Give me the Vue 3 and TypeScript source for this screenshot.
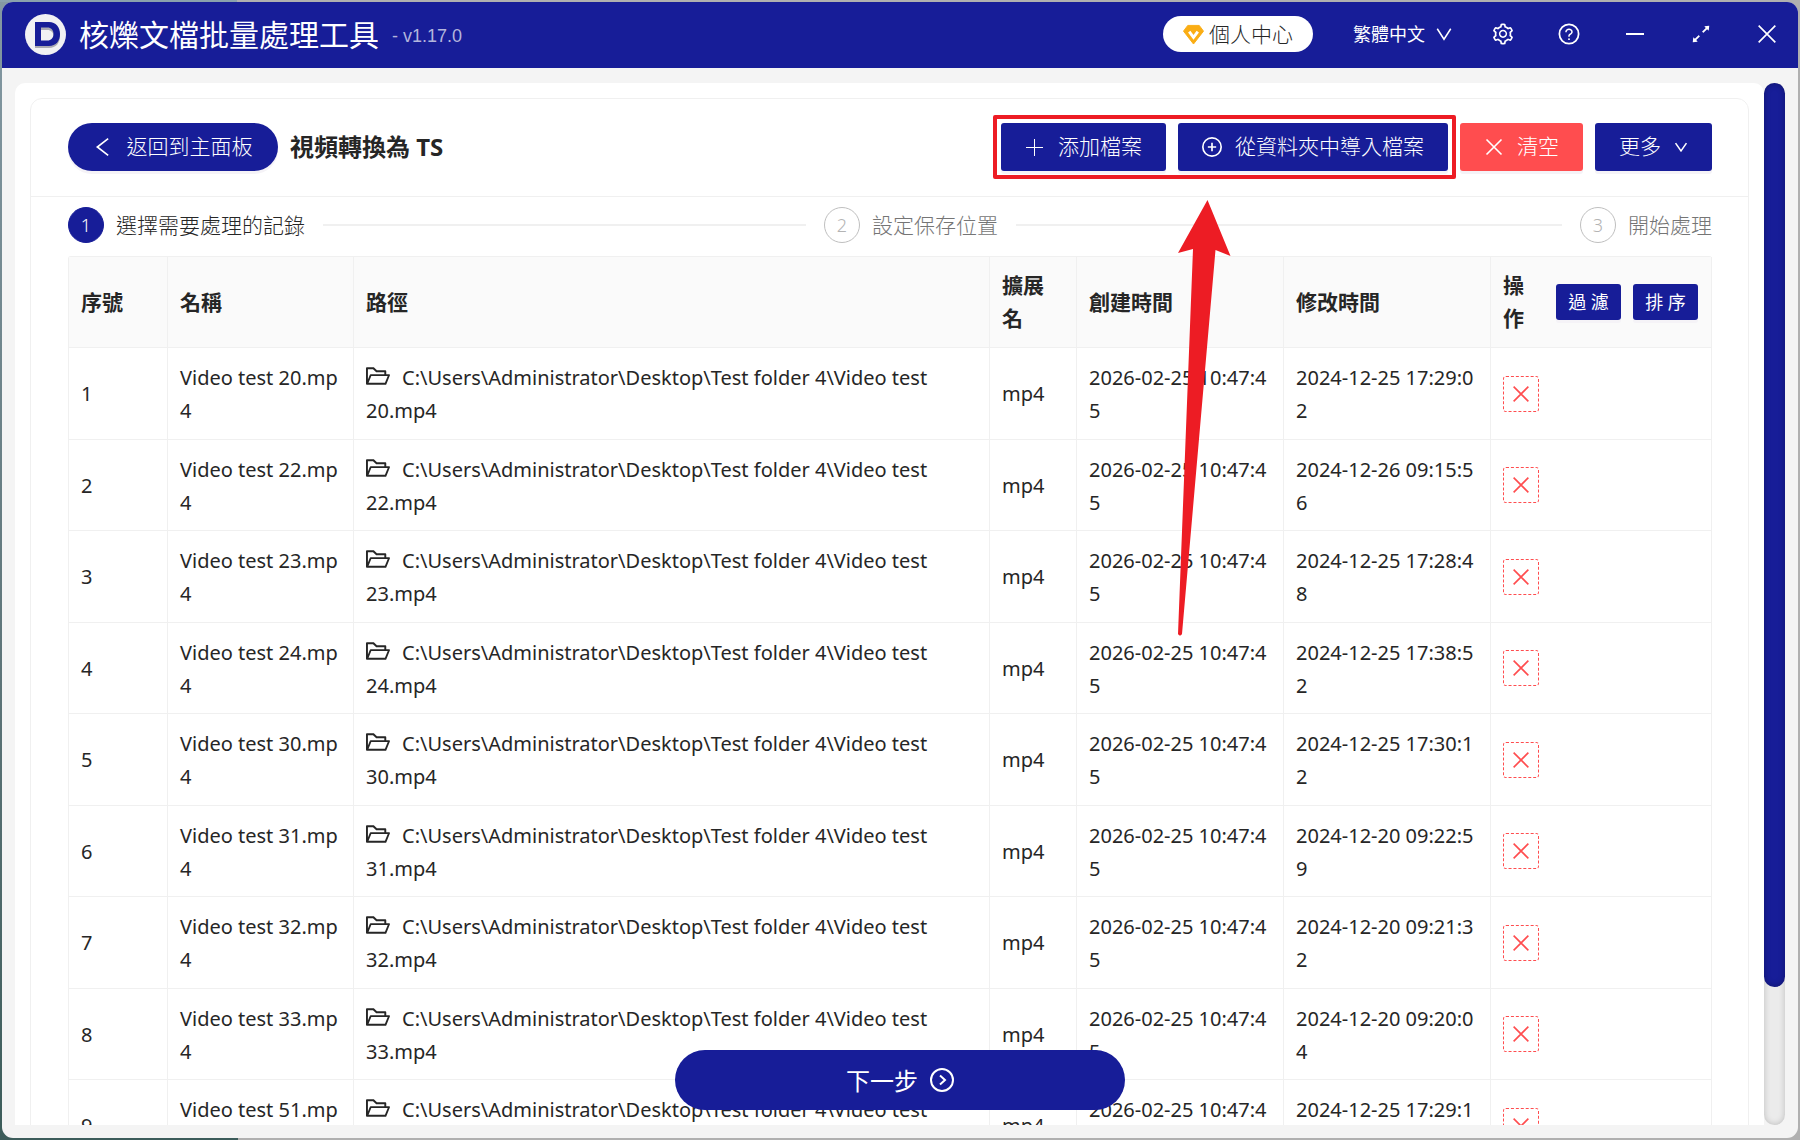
<script setup lang="ts">
import { ref } from 'vue'

interface VideoRecord {
  name: string
  ext: string
  created: string
  modified: string
}

const folder = 'C:\\Users\\Administrator\\Desktop\\Test folder 4\\'
const created = '2026-02-25 10:47:45'

const records = ref<VideoRecord[]>([
  { name: 'Video test 20.mp4', ext: 'mp4', created, modified: '2024-12-25 17:29:02' },
  { name: 'Video test 22.mp4', ext: 'mp4', created, modified: '2024-12-26 09:15:56' },
  { name: 'Video test 23.mp4', ext: 'mp4', created, modified: '2024-12-25 17:28:48' },
  { name: 'Video test 24.mp4', ext: 'mp4', created, modified: '2024-12-25 17:38:52' },
  { name: 'Video test 30.mp4', ext: 'mp4', created, modified: '2024-12-25 17:30:12' },
  { name: 'Video test 31.mp4', ext: 'mp4', created, modified: '2024-12-20 09:22:59' },
  { name: 'Video test 32.mp4', ext: 'mp4', created, modified: '2024-12-20 09:21:32' },
  { name: 'Video test 33.mp4', ext: 'mp4', created, modified: '2024-12-20 09:20:04' },
  { name: 'Video test 51.mp4', ext: 'mp4', created, modified: '2024-12-25 17:29:12' },
])

const steps = ['選擇需要處理的記錄', '設定保存位置', '開始處理']
const current = ref(0)

function removeRecord(index: number) {
  records.value.splice(index, 1)
}
</script>

<template>
  <div class="desktop">
    <div class="window">
      <header class="titlebar">
        <svg class="logo" viewBox="0 0 41 41" aria-hidden="true">
          <circle cx="20.5" cy="20.5" r="20.5" fill="#f1f1f3" />
          <path fill-rule="evenodd" d="M10 10h14c7 0 11 5 11 12s-4 12-11 12H10zM16 16v12h6.500c3.500 0 6-2.500 6-6s-2.500-6-6-6z" fill="#8a8a96" opacity=".7" />
          <path fill-rule="evenodd" d="M10 8h14c7 0 11 5 11 12s-4 12-11 12H10zM16 13.500v13h6.500c3.500 0 6-2.500 6-6.500s-2.500-6.500-6-6.500z" fill="#171d98" />
        </svg>
        <h1 class="app-name">核爍文檔批量處理工具</h1>
        <span class="version">- v1.17.0</span>
        <button class="account" type="button">
          <svg class="icon-vip" viewBox="0 0 22 22" aria-hidden="true">
            <path d="M5 2h12l4.500 6L11 21.500.5 8z" fill="#faad14" stroke="#faad14" stroke-linejoin="round" />
            <path d="M6.500 8.500 11 14.500l4.500-6" fill="none" stroke="#fff" stroke-width="3" />
          </svg>
          個人中心
        </button>
        <button class="language" type="button">
          繁體中文
          <svg class="icon-18" viewBox="0 0 24 24" aria-hidden="true"><path class="line" d="M3 5l9 14 9-14" /></svg>
        </button>
        <nav class="window-tools">
          <button type="button" aria-label="設定">
            <svg class="icon-24" viewBox="0 0 1024 1024" aria-hidden="true"><path fill="currentColor" d="M924.8 625.7l-65.5-56c3.1-19 4.7-38.4 4.7-57.8s-1.6-38.8-4.7-57.8l65.5-56a32.03 32.03 0 009.3-35.2l-.9-2.6a443.74 443.74 0 00-79.7-137.9l-1.8-2.1a32.12 32.12 0 00-35.1-9.5l-81.3 28.9c-30-24.6-63.5-44-99.7-57.6l-15.7-85a32.05 32.05 0 00-25.8-25.7l-2.7-.5c-52.1-9.4-106.900-9.4-159 0l-2.7.5a32.05 32.05 0 00-25.8 25.7l-15.8 85.4a351.86 351.86 0 00-99 57.4l-81.9-29.1a32 32 0 00-35.1 9.5l-1.8 2.1a446.02 446.02 0 00-79.7 137.9l-.9 2.6c-4.5 12.5-.8 26.5 9.3 35.2l66.3 56.6c-3.1 18.8-4.6 38-4.6 57.1 0 19.2 1.5 38.4 4.6 57.1L99 625.5a32.03 32.03 0 00-9.300 35.2l.9 2.6c18.1 50.4 44.900 96.900 79.7 137.900l1.8 2.1a32.120 32.120 0 0035.1 9.5l81.9-29.1c29.8 24.5 63.1 43.9 99 57.4l15.8 85.4a32.05 32.05 0 0025.8 25.7l2.7.5a449.4 449.4 0 00159 0l2.7-.5a32.05 32.05 0 0025.8-25.7l15.7-85a350 350 0 0099.7-57.6l81.3 28.9a32 32 0 0035.1-9.5l1.8-2.1c34.8-41.1 61.6-87.5 79.7-137.9l.9-2.6c4.5-12.3.8-26.3-9.3-35zM788.3 465.9c2.500 15.1 3.8 30.6 3.8 46.1s-1.3 31-3.8 46.1l-6.6 40.1 74.7 63.9a370.03 370.03 0 01-42.6 73.6L721 702.8l-31.4 25.8c-23.9 19.6-50.5 35-79.3 45.8l-38.1 14.3-17.9 97a377.5 377.5 0 01-85 0l-17.9-97.2-37.8-14.5c-28.5-10.8-55-26.2-78.7-45.7l-31.4-25.9-93.4 33.2c-17-22.9-31.2-47.6-42.6-73.6l75.5-64.5-6.5-40c-2.4-14.9-3.7-30.3-3.7-45.5 0-15.3 1.2-30.6 3.7-45.5l6.5-40-75.5-64.5c11.3-26.1 25.6-50.7 42.6-73.6l93.4 33.2 31.4-25.9c23.7-19.5 50.2-34.9 78.7-45.7l37.900-14.300 17.900-97.200c28.100-3.200 56.800-3.200 85 0l17.900 97 38.100 14.300c28.700 10.800 55.400 26.200 79.300 45.800l31.400 25.800 92.800-32.900c17 22.900 31.200 47.600 42.600 73.600L781.800 426l6.500 39.900zM512 326c-97.2 0-176 78.8-176 176s78.8 176 176 176 176-78.8 176-176-78.8-176-176-176zm79.2 255.2A111.6 111.6 0 01512 614c-29.9 0-58-11.7-79.2-32.8A111.6 111.6 0 01400 502c0-29.9 11.7-58 32.8-79.2C454 401.6 482.1 390 512 390c29.9 0 58 11.6 79.2 32.8A111.6 111.6 0 01624 502c0 29.9-11.7 58-32.8 79.2z" /></svg>
          </button>
          <button type="button" aria-label="說明">
            <svg class="icon-24" viewBox="0 0 1024 1024" aria-hidden="true">
              <circle cx="512" cy="512" r="410" fill="none" stroke="currentColor" stroke-width="76" />
              <path fill="currentColor" d="M623.6 316.7C593.6 290.4 554 276 512 276s-81.6 14.5-111.6 40.7C369.2 344 352 380.7 352 420v7.6c0 4.4 3.6 8 8 8h48c4.4 0 8-3.6 8-8V420c0-44.1 43.1-80 96-80s96 35.9 96 80c0 31.1-22 59.6-56.1 72.7-21.2 8.1-39.2 22.3-52.1 40.9-13.1 19-19.9 41.8-19.9 64.9V620c0 4.4 3.6 8 8 8h48c4.4 0 8-3.6 8-8v-22.7a48.3 48.3 0 0130.900-44.8c59-22.7 97.1-74.7 97.1-132.5.1-39.3-17.1-76-48.3-103.3zM472 732a40 40 0 1080 0 40 40 0 10-80 0z" />
            </svg>
          </button>
          <button type="button" aria-label="最小化">
            <svg class="icon-20" viewBox="0 0 20 20" aria-hidden="true"><path class="line" d="M1 10h18" /></svg>
          </button>
          <button type="button" aria-label="最大化">
            <svg class="icon-24" viewBox="0 0 1024 1024" aria-hidden="true"><path fill="currentColor" d="M855 160.1l-189.2 23.5c-6.6.8-9.3 8.8-4.7 13.5l54.7 54.7-153.5 153.5a8.03 8.03 0 000 11.3l45.1 45.1c3.1 3.1 8.2 3.1 11.3 0l153.6-153.6 54.7 54.7a7.94 7.94 0 0013.5-4.7L863.9 169a7.9 7.9 0 00-8.9-8.9zM416.6 562.3a8.03 8.03 0 00-11.3 0L251.8 715.9l-54.7-54.7a7.94 7.94 0 00-13.5 4.7L160.1 855c-.6 5.2 3.7 9.5 8.9 8.9l189.2-23.5c6.6-.8 9.3-8.8 4.7-13.5l-54.7-54.7 153.6-153.6c3.1-3.1 3.1-8.2 0-11.3l-45.2-45z" /></svg>
          </button>
          <button type="button" aria-label="關閉">
            <svg class="icon-20" viewBox="0 0 24 24" aria-hidden="true"><path class="line" d="M2 2l20 20M22 2L2 22" /></svg>
          </button>
        </nav>
      </header>

      <div class="body">
        <main class="panel">
          <section class="card">
            <div class="card-head">
              <button class="btn back" type="button">
                <svg class="icon-20" viewBox="0 0 24 24" aria-hidden="true"><path class="line" d="M17 2L4 12l13 10" /></svg>
                返回到主面板
              </button>
              <h2 class="card-title">視頻轉換為 TS</h2>
              <div class="actions">
                <div class="marked">
                  <button class="btn" type="button">
                    <svg class="icon-20" viewBox="0 0 20 20" aria-hidden="true"><path class="thin" d="M9.500 2v17M1 10.500h17" /></svg>
                    添加檔案
                  </button>
                  <button class="btn" type="button">
                    <svg class="icon-20" viewBox="0 0 24 24" aria-hidden="true">
                      <circle class="line" cx="12" cy="12" r="11" />
                      <path class="line" d="M12 7v10M7 12h10" />
                    </svg>
                    從資料夾中導入檔案
                  </button>
                </div>
                <button class="btn danger" type="button">
                  <svg class="icon-20" viewBox="0 0 24 24" aria-hidden="true"><path class="line" d="M3 3l18 18M21 3L3 21" /></svg>
                  清空
                </button>
                <button class="btn" type="button">
                  更多
                  <svg class="icon-14" viewBox="0 0 18 18" aria-hidden="true"><path class="line" d="M2 4l7 10 7-10" /></svg>
                </button>
              </div>
            </div>

            <ol class="steps">
              <li v-for="(step, i) in steps" :key="step" :class="['step', { active: i === current }]">
                <span class="step-num">{{ i + 1 }}</span>
                <span class="step-title">{{ step }}</span>
              </li>
            </ol>

            <table class="records">
              <colgroup>
                <col class="c-index" />
                <col class="c-name" />
                <col />
                <col class="c-ext" />
                <col class="c-time" />
                <col class="c-time" />
                <col class="c-ops" />
              </colgroup>
              <thead>
                <tr>
                  <th scope="col">序號</th>
                  <th scope="col">名稱</th>
                  <th scope="col">路徑</th>
                  <th scope="col">擴展名</th>
                  <th scope="col">創建時間</th>
                  <th scope="col">修改時間</th>
                  <th scope="col">
                    <div class="ops-head">
                      <span class="ops-label">操作</span>
                      <button class="btn small" type="button">過 濾</button>
                      <button class="btn small" type="button">排 序</button>
                    </div>
                  </th>
                </tr>
              </thead>
              <tbody>
                <tr v-for="(record, i) in records" :key="record.name">
                  <td>{{ i + 1 }}</td>
                  <td class="two-line break">{{ record.name }}</td>
                  <td class="two-line">
                    <svg class="icon-folder" viewBox="64 64 896 896" aria-hidden="true"><path fill="currentColor" d="M928 444H820V330.4c0-17.7-14.3-32-32-32H473L355.7 186.2a8.15 8.15 0 00-5.5-2.2H96c-17.7 0-32 14.3-32 32v592c0 17.7 14.3 32 32 32h698c13 0 24.8-7.9 29.7-20l134-332c1.5-3.8 2.3-7.9 2.3-12 0-17.7-14.3-32-32-32zM136 256h188.5l119.6 114.4H748V444H238c-13 0-24.8 7.9-29.7 20L136 643.2V256zm635.3 512H159l103.3-256h612.4L771.3 768z" /></svg>{{ folder + record.name }}
                  </td>
                  <td>{{ record.ext }}</td>
                  <td class="two-line break">{{ record.created }}</td>
                  <td class="two-line break">{{ record.modified }}</td>
                  <td>
                    <button class="remove" type="button" aria-label="移除" @click="removeRecord(i)">
                      <svg class="icon-18" viewBox="0 0 22 22" aria-hidden="true"><path class="line" d="M2 2l18 18M20 2L2 20" /></svg>
                    </button>
                  </td>
                </tr>
              </tbody>
            </table>
          </section>
        </main>
        <div class="scroll-track"><div class="scroll-thumb"></div></div>
      </div>

      <button class="next" type="button">
        下一步
        <svg class="icon-24" viewBox="0 0 24 24" aria-hidden="true">
          <circle class="line" cx="12" cy="12" r="11" />
          <path class="line" d="M10 7.500l5 4.500-5 4.500" />
        </svg>
      </button>
    </div>

    <svg class="pointer" viewBox="0 0 54 438" aria-hidden="true">
      <path d="M30.500 0L53.500 56 38.500 50 5 434q-2 3-4 0L16 49 1 53z" fill="#ed1c24" />
    </svg>
  </div>
</template>

<style>
html,
body {
  margin: 0;
  background: #a6a6a6;
}
</style>

<style scoped>
* {
  box-sizing: border-box;
}

.desktop {
  position: relative;
  height: 100vh;
  padding: 2px;
  overflow: hidden;
  background:
    linear-gradient(90deg, #8aa2ad 237px, transparent 237px) 0 0 / 100% 2px no-repeat,
    linear-gradient(90deg, #3c5c5a 238px, transparent 238px) 0 100% / 100% 20px no-repeat,
    linear-gradient(#8499a3, #5d7478 60%, #3c5c5a) 0 0 / 20px 100% no-repeat,
    #b0b0b0;
  color: #262626;
  font-family: "Noto Sans", "Noto Sans CJK TC", sans-serif;
  font-size: 20px;
  line-height: 33px;
}

button {
  display: inline-flex;
  align-items: center;
  justify-content: center;
  padding: 0;
  border: 0;
  background: none;
  color: inherit;
  font: inherit;
  cursor: pointer;
  white-space: nowrap;
}

svg {
  flex: none;
}

.line,
.thin {
  fill: none;
  stroke: currentColor;
  stroke-width: 2px;
}

.thin {
  stroke-width: 1px;
}

.icon-14 { width: 14px; height: 14px; }
.icon-18 { width: 18px; height: 18px; }
.icon-20 { width: 20px; height: 20px; }
.icon-24 { width: 24px; height: 24px; }

.window {
  position: relative;
  display: flex;
  flex-direction: column;
  height: 100%;
  overflow: hidden;
  border-radius: 11px;
  background: #f4f4f4;
}

.titlebar {
  display: flex;
  flex: none;
  align-items: center;
  height: 66px;
  padding: 0 0 2px 23px;
  background: #171d98;
  color: #fff;
}

.logo {
  width: 41px;
  height: 41px;
}

.app-name {
  margin: 0 13px;
  font-size: 30px;
  font-weight: 400;
  white-space: nowrap;
}

.version {
  flex: 1;
  padding-top: 4px;
  color: #b3b5dc;
  font-family: "Liberation Sans", sans-serif;
  font-size: 18px;
}

.account {
  gap: 5px;
  width: 150px;
  height: 36px;
  border-radius: 18px;
  background: #fff;
  color: #262626;
  font-size: 21px;
  font-weight: 300;
}

.icon-vip {
  width: 21px;
  height: 22px;
}

.language {
  gap: 10px;
  margin-left: 40px;
  font-size: 18px;
}

.window-tools {
  display: flex;
  margin: 0 -2px 0 17px;
}

.window-tools button {
  width: 66px;
  height: 64px;
}

.body {
  display: flex;
  flex: 1;
  min-height: 0;
  padding: 15px 13px 13px;
}

.panel {
  flex: 1;
  min-width: 0;
  padding: 15px 15px 0;
  overflow: hidden;
  border-radius: 10px 10px 0 0;
  background: #fff;
}

.card {
  border: 1px solid #f0f0f0;
  border-radius: 12px;
}

.card-head {
  display: flex;
  align-items: center;
  height: 98px;
  padding: 0 36px 2px 37px;
  border-bottom: 1px solid #f0f0f0;
}

.btn {
  gap: 13px;
  height: 48px;
  padding: 0 24px;
  border-radius: 3px;
  background: #171d98;
  box-shadow: 0 3px 0 #f5f3f7;
  color: #fff;
  font-size: 21px;
  font-weight: 300;
}

.back {
  width: 210px;
  border-radius: 24px;
}

.card-title {
  flex: 1;
  margin: 0 0 0 12px;
  font-size: 24px;
  font-weight: 700;
}

.actions {
  display: flex;
  gap: 12px;
}

.marked {
  display: flex;
  gap: 12px;
  margin: -8px;
  padding: 4px;
  border: 4px solid #ed1c24;
  border-radius: 2px;
}

.danger {
  background: #ff4d4f;
}

.steps {
  display: flex;
  height: 59px;
  margin: 0;
  padding: 10px 36px 0 37px;
  list-style: none;
  font-size: 21px;
  font-weight: 300;
}

.step {
  display: flex;
  flex: 1;
  align-items: center;
  height: 36px;
  margin-right: 18px;
  color: #757575;
  white-space: nowrap;
}

.step:last-child {
  flex: none;
  margin-right: 0;
}

.step:not(:last-child)::after {
  flex: 1;
  height: 2px;
  margin-left: 18px;
  background: #f0f0f0;
  content: "";
}

.step-num {
  display: flex;
  align-items: center;
  justify-content: center;
  width: 36px;
  height: 36px;
  margin-right: 12px;
  border: 1px solid #bfbfbf;
  border-radius: 50%;
  color: #b4b4b4;
  font-size: 18px;
}

.active {
  color: #262626;
}

.active .step-num {
  border-color: #171d98;
  background: #171d98;
  color: #fff;
}

.records {
  width: calc(100% - 73px);
  margin: 0 36px 0 37px;
  border-top: 1px solid #f0f0f0;
  border-left: 1px solid #f0f0f0;
  border-radius: 3px 3px 0 0;
  border-collapse: separate;
  border-spacing: 0;
  table-layout: fixed;
}

.c-index { width: 99px; }
.c-name { width: 186px; }
.c-ext { width: 87px; }
.c-time { width: 207px; }
.c-ops { width: 221px; }

th,
td {
  padding: 12px;
  border-right: 1px solid #f0f0f0;
  border-bottom: 1px solid #f0f0f0;
  text-align: left;
  vertical-align: middle;
}

th {
  background: #fafafa;
  font-size: 21px;
  font-weight: 700;
}

.two-line {
  padding: 13px 12px 11px;
}

tbody tr:nth-child(odd) .two-line {
  padding-bottom: 12px;
}

.break {
  word-break: break-all;
}

.ops-head {
  display: flex;
  align-items: center;
  gap: 12px;
}

.ops-label {
  width: 21px;
  margin-right: 20px;
}

.small {
  width: 65px;
  height: 36px;
  padding: 0;
  font-size: 18px;
  font-weight: 400;
}

.icon-folder {
  width: 24px;
  height: 24px;
  margin-right: 12px;
  vertical-align: -3px;
}

.remove {
  width: 36px;
  height: 36px;
  border: 1px dashed #ff4d4f;
  border-radius: 3px;
  color: #ff4d4f;
  vertical-align: middle;
}

.scroll-track {
  flex: none;
  width: 21px;
  border-radius: 11px;
  background: #ebebeb;
  box-shadow: inset 0 0 6px rgba(0, 0, 0, 0.2);
}

.scroll-thumb {
  height: 86.8%;
  border-radius: 11px;
  background: #171d98;
  box-shadow: inset 0 0 6px rgba(0, 0, 0, 0.3);
}

.next {
  position: absolute;
  bottom: 28px;
  left: 50%;
  gap: 12px;
  width: 450px;
  height: 60px;
  margin-left: -225px;
  border-radius: 30px;
  background: #171d98;
  color: #fff;
  font-size: 24px;
}

.pointer {
  position: absolute;
  top: 200px;
  right: 569px;
  width: 54px;
  height: 438px;
}
</style>
